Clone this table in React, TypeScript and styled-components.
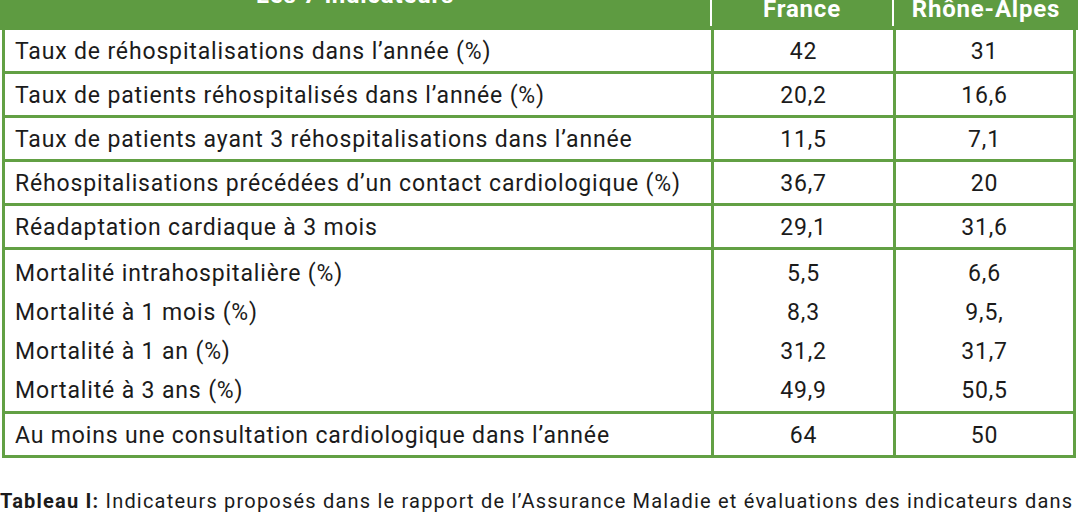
import React from "react";
import styled, { createGlobalStyle } from "styled-components";

const GREEN = "#62a044";
const HEADER_GREEN = "#5e9b41";

const Global = createGlobalStyle`
  html, body { margin: 0; padding: 0; background: #ffffff; overflow: hidden; }
  body { font-family: Roboto, "Liberation Sans", sans-serif; color: #1b1b1b; }
`;

const Page = styled.div`
  width: 1078px;
  height: 516px;
  overflow: hidden;
  display: flex;
  flex-direction: column;
`;

const Header = styled.div`
  height: 30px;
  flex-shrink: 0;
  background: ${HEADER_GREEN};
  display: grid;
  grid-template-columns: 710px 182px 1fr;
  overflow: hidden;
`;

const HeadCell = styled.div<{ $divider?: boolean; $pb: number }>`
  display: flex;
  align-items: flex-end;
  justify-content: center;
  padding-bottom: ${(p) => p.$pb}px;
  color: #ffffff;
  font-weight: 700;
  font-size: 24px;
  line-height: 24px;
  letter-spacing: 0.8px;
  white-space: nowrap;
  overflow: hidden;
  border-left: ${(p) => (p.$divider ? "2px solid #ffffff" : "none")};
  margin-bottom: ${(p) => (p.$divider ? "4px" : "0")};
`;

const Body = styled.div`
  margin: 0 2px;
  flex-shrink: 0;
  border-left: 3px solid ${GREEN};
  border-right: 3px solid ${GREEN};
  display: flex;
  flex-direction: column;
`;

const Row = styled.div`
  display: grid;
  grid-template-columns: 706px 182px 1fr;
  border-bottom: 3px solid ${GREEN};
`;

const Cell = styled.div<{ $center?: boolean; $first?: boolean }>`
  display: flex;
  flex-direction: column;
  align-items: ${(p) => (p.$center ? "center" : "flex-start")};
  padding: 4px ${(p) => (p.$center ? "0" : "10px")} 1px;
  border-left: ${(p) => (p.$first ? "none" : `3px solid ${GREEN}`)};
  font-size: 23px;
  letter-spacing: 0.85px;
`;

const Line = styled.div<{ $h: number }>`
  height: ${(p) => p.$h}px;
  line-height: ${(p) => p.$h}px;
  white-space: nowrap;
`;

const Caption = styled.p`
  margin: 28px 0 0;
  width: 1078px;
  flex-shrink: 0;
  font-size: 20px;
  line-height: 30px;
  letter-spacing: 1.2px;
  color: #1b1b1b;
`;

const Bold = styled.span`
  font-weight: 700;
`;

type R = { labels: string[]; fr: string[]; ra: string[] };

const rows: R[] = [
  { labels: ["Taux de réhospitalisations dans l’année (%)"], fr: ["42"], ra: ["31"] },
  { labels: ["Taux de patients réhospitalisés dans l’année (%)"], fr: ["20,2"], ra: ["16,6"] },
  { labels: ["Taux de patients ayant 3 réhospitalisations dans l’année"], fr: ["11,5"], ra: ["7,1"] },
  { labels: ["Réhospitalisations précédées d’un contact cardiologique (%)"], fr: ["36,7"], ra: ["20"] },
  { labels: ["Réadaptation cardiaque à 3 mois"], fr: ["29,1"], ra: ["31,6"] },
  {
    labels: [
      "Mortalité intrahospitalière (%)",
      "Mortalité à 1 mois (%)",
      "Mortalité à 1 an (%)",
      "Mortalité à 3 ans (%)",
    ],
    fr: ["5,5", "8,3", "31,2", "49,9"],
    ra: ["6,6", "9,5,", "31,7", "50,5"],
  },
  { labels: ["Au moins une consultation cardiologique dans l’année"], fr: ["64"], ra: ["50"] },
];

export default function App() {
  return (
    <Page>
      <Global />
      <Header>
        <HeadCell $pb={23}>Les 7 indicateurs</HeadCell>
        <HeadCell $divider $pb={5}>France</HeadCell>
        <HeadCell $divider $pb={5}>Rhône-Alpes</HeadCell>
      </Header>
      <Body>
        {rows.map((r, i) => {
          const h = r.labels.length > 1 ? 39 : 36;
          return (
            <Row key={i}>
              <Cell $first>
                {r.labels.map((t) => (
                  <Line key={t} $h={h}>{t}</Line>
                ))}
              </Cell>
              <Cell $center>
                {r.fr.map((t, j) => (
                  <Line key={j} $h={h}>{t}</Line>
                ))}
              </Cell>
              <Cell $center>
                {r.ra.map((t, j) => (
                  <Line key={j} $h={h}>{t}</Line>
                ))}
              </Cell>
            </Row>
          );
        })}
      </Body>
      <Caption>
        <Bold>Tableau I:</Bold> Indicateurs proposés dans le rapport de l’Assurance Maladie et évaluations des indicateurs dans la région
      </Caption>
    </Page>
  );
}
